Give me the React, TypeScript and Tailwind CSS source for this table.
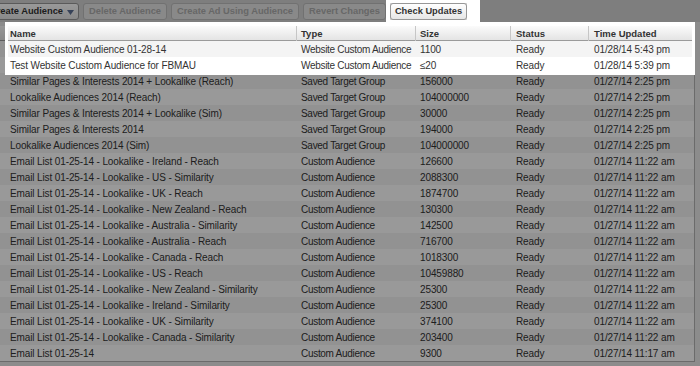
import React from 'react';

interface Audience {
  name: string;
  type: string;
  size: string;
  status: string;
  updated: string;
}

const audiences: Audience[] = [
  { name: 'Website Custom Audience 01-28-14', type: 'Website Custom Audience', size: '1100', status: 'Ready', updated: '01/28/14 5:43 pm' },
  { name: 'Test Website Custom Audience for FBMAU', type: 'Website Custom Audience', size: '≤20', status: 'Ready', updated: '01/28/14 5:39 pm' },
  { name: 'Similar Pages & Interests 2014 + Lookalike (Reach)', type: 'Saved Target Group', size: '156000', status: 'Ready', updated: '01/27/14 2:25 pm' },
  { name: 'Lookalike Audiences 2014 (Reach)', type: 'Saved Target Group', size: '104000000', status: 'Ready', updated: '01/27/14 2:25 pm' },
  { name: 'Similar Pages & Interests 2014 + Lookalike (Sim)', type: 'Saved Target Group', size: '30000', status: 'Ready', updated: '01/27/14 2:25 pm' },
  { name: 'Similar Pages & Interests 2014', type: 'Saved Target Group', size: '194000', status: 'Ready', updated: '01/27/14 2:25 pm' },
  { name: 'Lookalike Audiences 2014 (Sim)', type: 'Saved Target Group', size: '104000000', status: 'Ready', updated: '01/27/14 2:25 pm' },
  { name: 'Email List 01-25-14 - Lookalike - Ireland - Reach', type: 'Custom Audience', size: '126600', status: 'Ready', updated: '01/27/14 11:22 am' },
  { name: 'Email List 01-25-14 - Lookalike - US - Similarity', type: 'Custom Audience', size: '2088300', status: 'Ready', updated: '01/27/14 11:22 am' },
  { name: 'Email List 01-25-14 - Lookalike - UK - Reach', type: 'Custom Audience', size: '1874700', status: 'Ready', updated: '01/27/14 11:22 am' },
  { name: 'Email List 01-25-14 - Lookalike - New Zealand - Reach', type: 'Custom Audience', size: '130300', status: 'Ready', updated: '01/27/14 11:22 am' },
  { name: 'Email List 01-25-14 - Lookalike - Australia - Similarity', type: 'Custom Audience', size: '142500', status: 'Ready', updated: '01/27/14 11:22 am' },
  { name: 'Email List 01-25-14 - Lookalike - Australia - Reach', type: 'Custom Audience', size: '716700', status: 'Ready', updated: '01/27/14 11:22 am' },
  { name: 'Email List 01-25-14 - Lookalike - Canada - Reach', type: 'Custom Audience', size: '1018300', status: 'Ready', updated: '01/27/14 11:22 am' },
  { name: 'Email List 01-25-14 - Lookalike - US - Reach', type: 'Custom Audience', size: '10459880', status: 'Ready', updated: '01/27/14 11:22 am' },
  { name: 'Email List 01-25-14 - Lookalike - New Zealand - Similarity', type: 'Custom Audience', size: '25300', status: 'Ready', updated: '01/27/14 11:22 am' },
  { name: 'Email List 01-25-14 - Lookalike - Ireland - Similarity', type: 'Custom Audience', size: '25300', status: 'Ready', updated: '01/27/14 11:22 am' },
  { name: 'Email List 01-25-14 - Lookalike - UK - Similarity', type: 'Custom Audience', size: '374100', status: 'Ready', updated: '01/27/14 11:22 am' },
  { name: 'Email List 01-25-14 - Lookalike - Canada - Similarity', type: 'Custom Audience', size: '203400', status: 'Ready', updated: '01/27/14 11:22 am' },
  { name: 'Email List 01-25-14', type: 'Custom Audience', size: '9300', status: 'Ready', updated: '01/27/14 11:17 am' },
];

function ToolbarButton({ label, className, disabled }: { label: string; className: string; disabled?: boolean }) {
  return (
    <div
      className={`flex h-[17px] shrink-0 items-center justify-center whitespace-nowrap rounded-[3px] border pt-[1px] text-[9.3px] font-bold ${
        disabled
          ? 'border-[#bcbcbc] bg-[#e4e4e4] text-[#acacac]'
          : 'border-[#979797] bg-gradient-to-b from-white to-[#e6e6e6] text-[#333]'
      } ${className}`}
    >
      {label}
    </div>
  );
}

export default function App() {
  return (
    <div className="relative h-[366px] w-[700px] overflow-hidden bg-[#e9e9e9] font-['Liberation_Sans',Arial,sans-serif] text-[#333]">
      {/* toolbar */}
      <div className="flex h-[22px] gap-1 bg-[#d3d3d3] pt-[3px]">
        <div className="-ml-[17px] flex h-[17px] w-[96px] shrink-0 items-center gap-[4px] whitespace-nowrap rounded-[3px] border border-[#979797] bg-gradient-to-b from-white to-[#e6e6e6] pl-[6px] pt-[1px] text-[9.3px] font-bold text-[#333]">
          Create Audience
          <svg width="7" height="5" viewBox="0 0 7 5">
            <path d="M0 0h7L3.5 5z" fill="#5d6f93" />
          </svg>
        </div>
        <ToolbarButton label="Delete Audience" className="w-[84px]" disabled />
        <ToolbarButton label="Create Ad Using Audience" className="w-[128px]" disabled />
        <ToolbarButton label="Revert Changes" className="w-[83px]" disabled />
        <ToolbarButton label="Check Updates" className="w-[77px]" />
      </div>
      <div className="h-[4px]" />

      {/* audiences table */}
      <div className="w-[695px] border-r border-b border-[#b2b2b2]">
        <div className="grid h-[15px] grid-cols-[297px_119px_95px_78px_106px] border-b border-[#9a9a9a] bg-gradient-to-b from-[#fbfbfb] to-[#e4e4e4] text-[9.5px] font-bold leading-[15px]">
          <div className="border-r border-[#c6c6c6] pl-[10px]">Name</div>
          <div className="border-r border-[#c6c6c6] pl-[4px]">Type</div>
          <div className="border-r border-[#c6c6c6] pl-[4px]">Size</div>
          <div className="border-r border-[#c6c6c6] pl-[5px]">Status</div>
          <div className="pl-[5px]">Time Updated</div>
        </div>
        {audiences.map((a, i) => (
          <div
            key={a.name}
            className={`grid h-[16px] grid-cols-[297px_119px_95px_78px_106px] whitespace-nowrap text-[10px] leading-[17px] tracking-[-0.12px] ${
              i % 2 === 0 ? 'bg-[#f4f4f4]' : 'bg-white'
            }`}
          >
            <div className="pl-[10px]">{a.name}</div>
            <div className="pl-[4px] tracking-[-0.3px]">{a.type}</div>
            <div className="pl-[4px]">{a.size}</div>
            <div className="pl-[5px]">{a.status}</div>
            <div className="pl-[5px]">{a.updated}</div>
          </div>
        ))}
      </div>

      {/* tour overlay with highlighted cutout */}
      <div className="absolute left-0 top-0 h-[22px] w-[386px] bg-black/40" />
      <div className="absolute left-[480px] top-0 h-[22px] w-[220px] bg-black/40" />
      <div className="absolute left-0 top-[22px] h-[53px] w-[5px] bg-black/40" />
      <div className="absolute left-[695px] top-[22px] h-[53px] w-[5px] bg-black/40" />
      <div className="absolute left-0 top-[75px] h-[291px] w-[700px] bg-black/40" />
      <div className="absolute left-[386px] top-0 h-[22px] w-[94px] border-l-4 border-r-[13px] border-t-[3px] border-b-2 border-white" />
      <div className="absolute left-[5px] top-[22px] h-[53px] w-[690px] border-x-[3px] border-t-4 border-b-2 border-white" />
    </div>
  );
}
